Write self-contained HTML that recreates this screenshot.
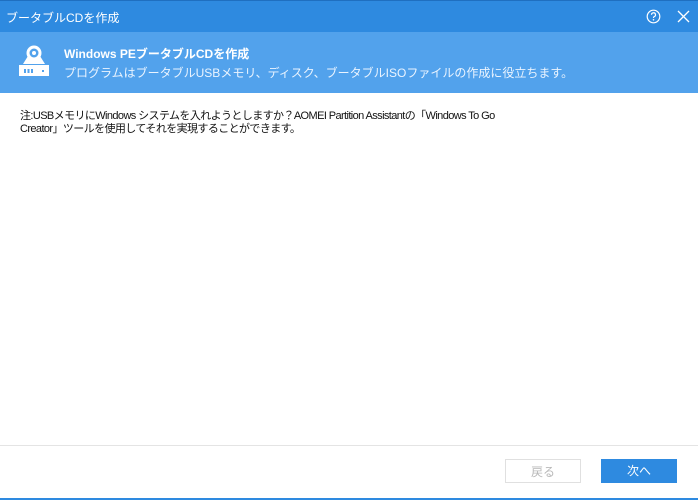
<!DOCTYPE html>
<html><head><meta charset="utf-8"><style>
*{margin:0;padding:0;box-sizing:border-box}
body{width:698px;height:500px;position:relative;background:#fff;font-family:"Liberation Sans","Noto Sans CJK JP",sans-serif;overflow:hidden}
.tb{position:absolute;left:0;top:0;width:698px;height:32px;background:#2e8ae0;border-top:1px solid #1f6fc0}
.tb .t{position:absolute;left:6px;top:8px;color:#fff;font-size:12px}
.hd{position:absolute;left:0;top:32px;width:698px;height:61px;background:#52a2ec}
.hd .a{position:absolute;left:64px;top:13px;color:#fff;font-size:12px;font-weight:bold}
.hd .b{position:absolute;left:64px;top:32px;color:#eaf4ff;font-size:12px}
.note{position:absolute;left:20px;top:110px;font-size:11px;line-height:13px;color:#111;white-space:nowrap;letter-spacing:-0.6px}
.line{position:absolute;left:0;top:445px;width:698px;height:1px;background:#e4e4e4}
.btn{position:absolute;top:459px;width:76px;height:24px;font-size:12px;text-align:center;line-height:24px}
.back{left:505px;border:1px solid #e0e0e0;color:#b8b8b8;background:#fff}
.next{left:601px;background:#2e8ae0;color:#fff}
.bot{position:absolute;left:0;top:498px;width:698px;height:2px;background:#2e8ae0}
</style></head><body>
<div class="tb"><div class="t">ブータブルCDを作成</div>
<svg style="position:absolute;left:646px;top:8px" width="15" height="15" viewBox="0 0 15 15"><circle cx="7.5" cy="7.5" r="6.3" fill="none" stroke="#fff" stroke-width="1.2"/><path d="M5.5 5.8a2 2 0 1 1 2.6 1.9c-.6.2-.6.6-.6 1.3" fill="none" stroke="#fff" stroke-width="1.2"/><circle cx="7.5" cy="10.8" r=".8" fill="#fff"/></svg>
<svg style="position:absolute;left:677px;top:9px" width="13" height="13" viewBox="0 0 13 13"><path d="M1 1L12 12M12 1L1 12" stroke="#fff" stroke-width="1.3"/></svg>
</div>
<div class="hd">
<svg style="position:absolute;left:17px;top:12px" width="34" height="34" viewBox="0 0 34 34"><path d="M6 20L11 12H23L28 20Z" fill="#fff"/><circle cx="17" cy="9" r="7.5" fill="#fff"/><circle cx="17" cy="9" r="4.5" fill="#52a2ec"/><circle cx="17" cy="9" r="2" fill="#fff"/><rect x="2" y="21" width="30" height="11" fill="#fff"/><rect x="7" y="25" width="2" height="4" fill="#52a2ec"/><rect x="10.5" y="25" width="2" height="4" fill="#52a2ec"/><rect x="14" y="25" width="2" height="4" fill="#52a2ec"/><rect x="25" y="26" width="2" height="2" fill="#52a2ec"/></svg>
<div class="a">Windows PEブータブルCDを作成</div>
<div class="b">プログラムはブータブルUSBメモリ、ディスク、ブータブルISOファイルの作成に役立ちます。</div>
</div>
<div class="note">注:USBメモリにWindows システムを入れようとしますか？AOMEI Partition Assistantの「Windows To Go<br>Creator」ツールを使用してそれを実現することができます。</div>
<div class="line"></div>
<div class="btn back">戻る</div>
<div class="btn next">次へ</div>
<div class="bot"></div>
</body></html>
